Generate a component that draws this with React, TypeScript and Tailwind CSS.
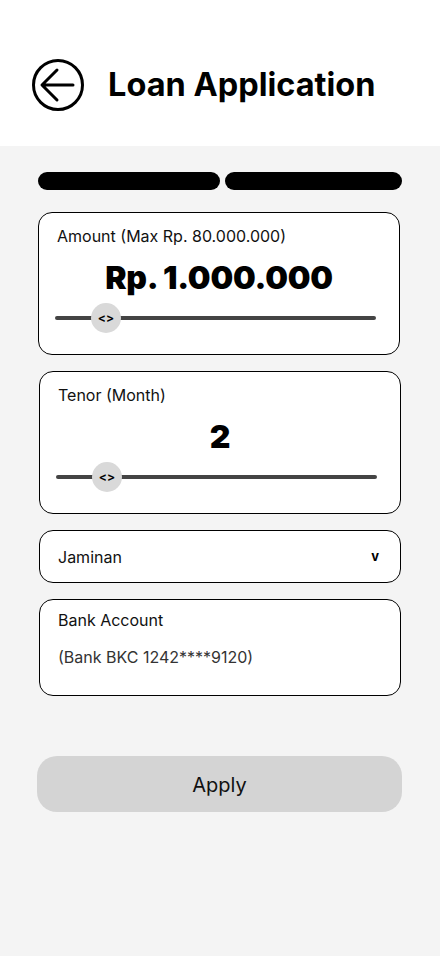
import React from "react";

function Slider({ thumbX }: { thumbX: number }) {
  return (
    <div className="relative h-[30px] ml-[16px] mr-[23px]">
      <div className="absolute left-0 right-0 top-[13px] h-[4px] rounded-full bg-[#444444]" />
      <div
        className="absolute top-0 w-[30px] h-[30px] rounded-full bg-[#d9d9d9] flex items-center justify-center text-[12px] font-bold text-black leading-none"
        style={{ left: thumbX }}
      >
        &lt;&gt;
      </div>
    </div>
  );
}

export default function App() {
  return (
    <div
      className="w-[440px] min-h-[956px] bg-[#f4f4f4] flex flex-col"
      style={{ fontFamily: "Inter, 'Noto Sans', sans-serif" }}
    >
      <header className="h-[146px] bg-white flex items-start pt-[59px] pl-[32px] gap-[24px]">
        <svg width="52" height="52" viewBox="0 0 52 52" fill="none">
          <circle cx="26" cy="26" r="24.5" stroke="black" strokeWidth="3" />
          <path d="M41 26H11M25 11L10 26L25 41" stroke="black" strokeWidth="3" strokeLinecap="round" strokeLinejoin="round" />
        </svg>
        <h1 className="text-[32.5px] font-bold leading-[52px] text-black">Loan Application</h1>
      </header>

      <div className="flex gap-[5px] pl-[38px] mt-[26px]">
        <div className="w-[182px] h-[18px] rounded-full bg-black" />
        <div className="w-[177px] h-[18px] rounded-full bg-black" />
      </div>

      <section className="ml-[38px] mt-[22px] w-[362px] h-[143px] bg-white border border-black rounded-[14px] pt-[13px]">
        <div className="pl-[18px] text-[16px] leading-[20px] text-[#111]">Amount (Max Rp. 80.000.000)</div>
        <div className="text-center text-[32px] font-black leading-[36px] mt-[14px] tracking-[-0.2px] text-black">Rp. 1.000.000</div>
        <div className="mt-[7px]">
          <Slider thumbX={36} />
        </div>
      </section>

      <section className="ml-[39px] mt-[16px] w-[362px] h-[143px] bg-white border border-black rounded-[14px] pt-[13px]">
        <div className="pl-[18px] text-[16px] leading-[20px] text-[#111]">Tenor (Month)</div>
        <div className="text-center text-[32px] font-black leading-[36px] mt-[14px] text-black">2</div>
        <div className="mt-[7px]">
          <Slider thumbX={36} />
        </div>
      </section>

      <section className="ml-[39px] mt-[16px] w-[362px] h-[53px] bg-white border border-black rounded-[14px] flex items-center justify-between pl-[18px] pr-[21px]">
        <span className="text-[16px] text-[#111]">Jaminan</span>
        <span className="text-[13px] font-bold text-black">v</span>
      </section>

      <section className="ml-[39px] mt-[16px] w-[362px] h-[97px] bg-white border border-black rounded-[14px] pl-[18px] pt-[10px]">
        <div className="text-[16px] leading-[20px] text-[#111]">Bank Account</div>
        <div className="text-[16px] leading-[20px] mt-[17px] text-[#333]">(Bank BKC 1242****9120)</div>
      </section>

      <button className="ml-[37px] mt-[60px] w-[365px] h-[56px] rounded-[20px] bg-[#d4d4d4] text-[20px] text-[#111] flex items-center justify-center pt-[1px]">
        Apply
      </button>
    </div>
  );
}
